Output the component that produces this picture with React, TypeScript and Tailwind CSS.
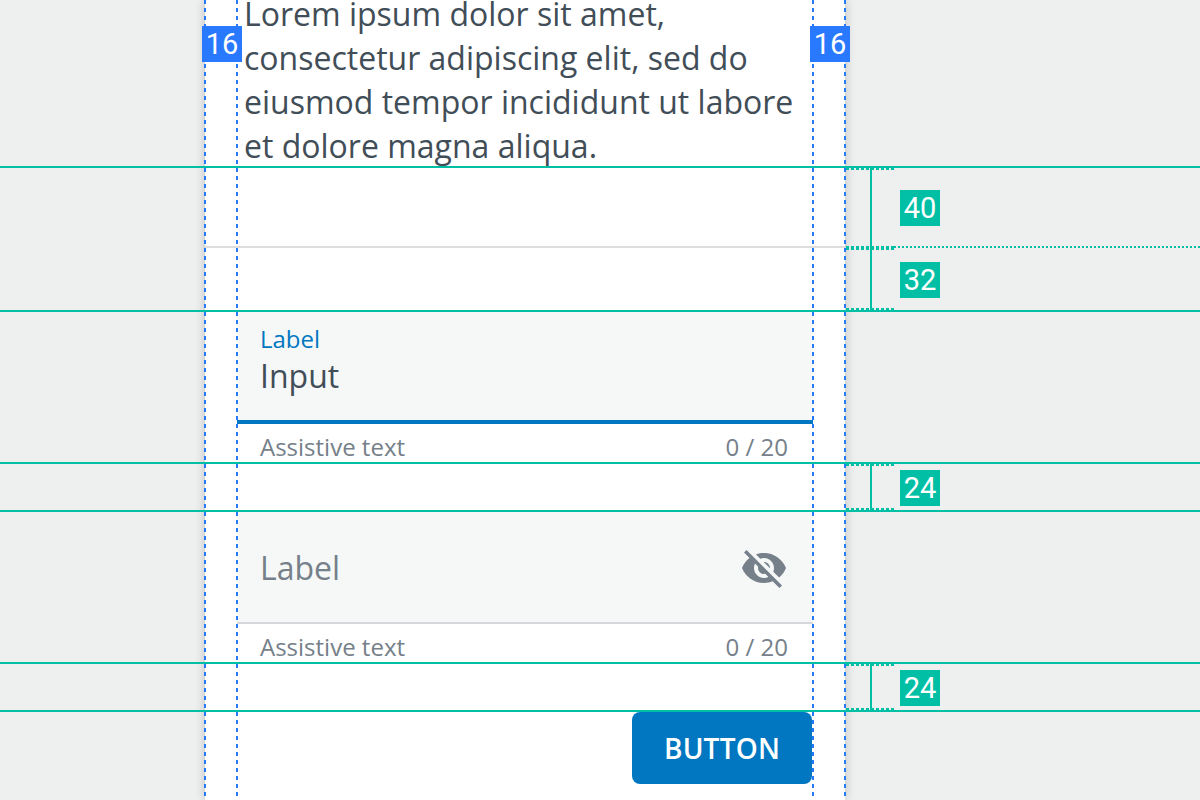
const sans = "font-['Open_Sans',sans-serif]";

function VDots({ className }: { className: string }) {
  return <div className={`absolute top-0 h-[800px] w-[2px] bg-[repeating-linear-gradient(to_bottom,#2979ff_0,#2979ff_4px,transparent_4px,transparent_8px)] ${className}`} />;
}

function HDots({ top }: { top: number }) {
  return <div className="absolute left-[846px] h-[2px] w-[48px] bg-[repeating-linear-gradient(to_right,#00bfa5_0,#00bfa5_3px,transparent_3px,transparent_5px)]" style={{ top }} />;
}

function GreenLine({ top }: { top: number }) {
  return <div className="absolute left-0 h-[2px] w-[1200px] bg-[#00bfa5]" style={{ top }} />;
}

function Tag({ value, left, top, blue }: { value: number; left: number; top: number; blue?: boolean }) {
  return (
    <div
      className={`absolute flex h-[36px] w-[40px] items-center justify-center pt-[1px] font-['Roboto',sans-serif] text-[29px] leading-none text-white ${blue ? "bg-[#2979ff]" : "bg-[#00bfa5]"}`}
      style={{ left, top }}
    >
      {value}
    </div>
  );
}

function Assistive() {
  return (
    <div className="flex h-[39px] items-center justify-between pl-[23px] pr-[25px] pt-[7px] text-[24px] leading-[32px] text-[#75808a]">
      <span>Assistive text</span>
      <span>0 / 20</span>
    </div>
  );
}

export default function App() {
  return (
    <div className={`relative h-[800px] w-[1200px] overflow-hidden bg-[#eef0ef] ${sans}`}>
      <div className="ml-[205px] h-[800px] w-[640px] overflow-hidden bg-white px-[32px] shadow-[0_0_10px_rgba(0,0,0,0.22)]">
        <p className="mt-[-8px] pl-[7px] text-[32px] leading-[44px] text-[#414d57]">
          Lorem ipsum dolor sit amet,
          <br />
          consectetur adipiscing elit, sed do
          <br />
          eiusmod tempor incididunt ut labore
          <br />
          et dolore magna aliqua.
        </p>
        <div className="mx-[-32px] mt-[78px] h-[2px] bg-[#dddddd]" />
        <div className="mt-[64px] flex h-[108px] flex-col bg-[#f6f8f8] pl-[23px]">
          <span className="mt-[12px] text-[24px] leading-[30px] text-[#0077c0]">Label</span>
          <span className="text-[32px] leading-[44px] text-[#414d57]">Input</span>
        </div>
        <div className="h-[4px] bg-[#0077c0]" />
        <Assistive />
        <div className="mt-[48px] flex h-[111px] items-center justify-between bg-[#f6f8f8] pl-[23px] pr-[25px] pt-[2px]">
          <span className="text-[32px] leading-[44px] text-[#75808a]">Label</span>
          <svg width="48" height="48" viewBox="0 0 24 24" fill="#75808a">
            <path d="M12 7c2.76 0 5 2.24 5 5 0 .65-.13 1.26-.36 1.83l2.92 2.92c1.51-1.26 2.7-2.89 3.43-4.75-1.73-4.39-6-7.5-11-7.5-1.4 0-2.74.25-3.98.7l2.16 2.16C10.74 7.13 11.35 7 12 7zM2 4.27l2.28 2.28.46.46C3.08 8.3 1.78 10.02 1 12c1.73 4.39 6 7.5 11 7.5 1.55 0 3.03-.3 4.38-.84l.42.42L19.73 22 21 20.73 3.27 3 2 4.27zM7.53 9.8l1.55 1.55c-.05.21-.08.43-.08.65 0 1.66 1.34 3 3 3 .22 0 .44-.03.65-.08l1.55 1.55c-.67.33-1.41.53-2.2.53-2.76 0-5-2.24-5-5 0-.79.2-1.53.53-2.2zm4.31-.78l3.15 3.15.02-.16c0-1.66-1.34-3-3-3l-.17.01z" />
          </svg>
        </div>
        <div className="h-[2px] bg-[#d5d8da]" />
        <Assistive />
        <div className="mt-[49px] flex justify-end pr-[1px]">
          <button className="h-[72px] w-[180px] rounded-[8px] bg-[#0077c0] text-[28px] font-semibold tracking-[0.2px] text-white">
            BUTTON
          </button>
        </div>
      </div>

      {[166, 310, 462, 510, 662, 710].map((t) => (
        <GreenLine key={t} top={t} />
      ))}
      <VDots className="left-[204px]" />
      <VDots className="left-[236px]" />
      <VDots className="left-[812px]" />
      <VDots className="left-[844px]" />

      <div className="absolute left-[870px] top-[168px] h-[142px] w-[2px] bg-[#00bfa5]" />
      <div className="absolute left-[870px] top-[464px] h-[46px] w-[2px] bg-[#00bfa5]" />
      <div className="absolute left-[870px] top-[664px] h-[46px] w-[2px] bg-[#00bfa5]" />
      {[168, 246, 248, 308, 464, 508, 664, 708].map((t) => (
        <HDots key={t} top={t} />
      ))}
      <div className="absolute left-[894px] top-[246px] h-[2px] w-[306px] bg-[repeating-linear-gradient(to_right,#00bfa5_0,#00bfa5_2px,transparent_2px,transparent_4px)]" />

      <Tag blue value={16} left={202} top={26} />
      <Tag blue value={16} left={810} top={26} />
      <Tag value={40} left={900} top={190} />
      <Tag value={32} left={900} top={262} />
      <Tag value={24} left={900} top={470} />
      <Tag value={24} left={900} top={670} />
    </div>
  );
}
